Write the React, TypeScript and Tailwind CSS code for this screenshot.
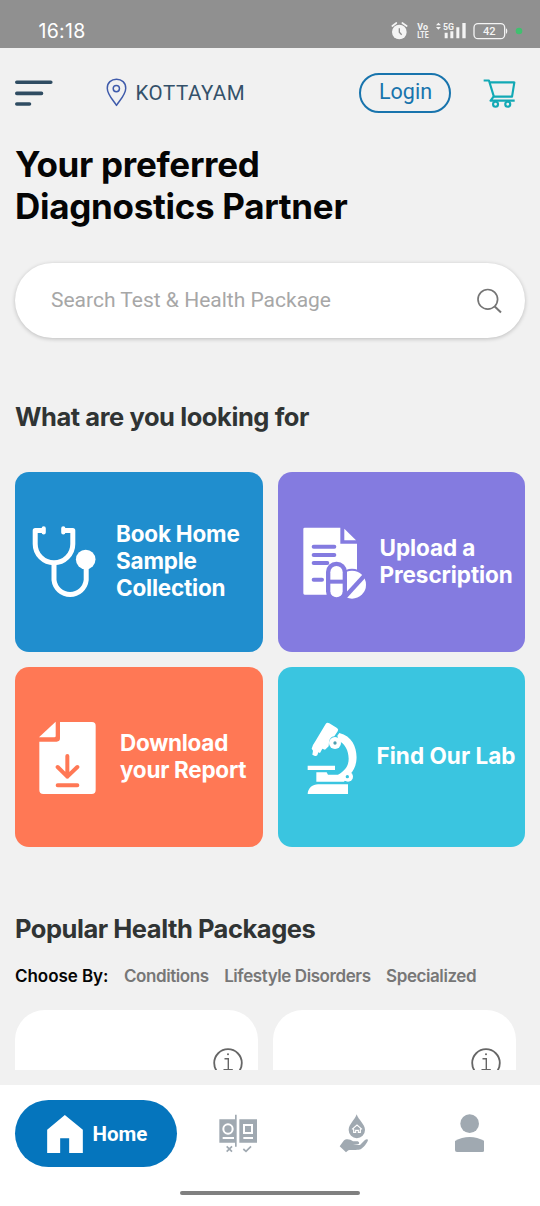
import React from 'react';

interface IconProps {
  className?: string;
}

interface ServiceCardProps {
  lines: string[];
  icon: React.ReactNode;
  className: string;
  textClass: string;
}

const MenuIcon = ({ className }: IconProps) => (
  <svg viewBox="0 0 38 28" className={className} stroke="#2f4c62" strokeWidth="3.6" strokeLinecap="round">
    <path d="M1.8 3.3H35.8M1.8 14.4H26.5M1.8 25H14.5" />
  </svg>
);

const PinIcon = ({ className }: IconProps) => (
  <svg viewBox="318 235 62 88" className={className} fill="none" stroke="#3f5bab" strokeWidth="4.5">
    <path d="M349 318C338 301 321 285 321 266C321 249 333 239 349 239C365 239 377 249 377 266C377 285 360 301 349 318Z" strokeLinejoin="round" />
    <circle cx="348.500" cy="267" r="9.500" />
  </svg>
);

const CartIcon = ({ className }: IconProps) => (
  <svg viewBox="399 234 100 93" className={className} fill="none" stroke="#12a9b5" strokeWidth="6.500" strokeLinejoin="round">
    <path d="M401 241H417L432 290H487L494 247H421" />
    <path d="M431 290L422 302H495" />
    <circle cx="437" cy="313" r="7.500" fill="#f1f1f1" />
    <circle cx="474" cy="313" r="7.500" fill="#f1f1f1" />
  </svg>
);

const StethoscopeIcon = () => (
  <svg viewBox="32 525 64 75" className="h-[75px] w-16" fill="none" stroke="#fff" strokeWidth="5">
    <path d="M44 530.500H35.200V544A18.800 18.800 0 0 0 72.800 544V530.500H63" strokeLinejoin="round" />
    <path d="M54 562V580A16.200 16.200 0 0 0 86.200 580V565" />
    <path d="M43.700 528.300V532.500M63.300 528.300V532.500" strokeWidth="4.200" strokeLinecap="round" />
    <circle cx="85.700" cy="559.500" r="9.800" fill="#fff" stroke="none" />
  </svg>
);

const PrescriptionIcon = () => (
  <svg viewBox="96 198 195 222" className="h-[74px] w-[65px]" fill="none">
    <path d="M104 203H211V251H261V404H104Q100 404 100 400V207Q100 203 104 203Z" fill="#fff" />
    <path d="M223 206L258 241H223Z" fill="#fff" />
    <path d="M131 260H193M131 285H193M131 309H172M131 359H156" stroke="#847be0" strokeWidth="12" strokeLinecap="round" />
    <circle cx="246" cy="374" r="48" fill="#847be0" />
    <circle cx="246" cy="374" r="42" fill="#fff" />
    <path d="M222 414L288 342" stroke="#847be0" strokeWidth="13" />
    <rect x="168" y="305" width="63" height="120" rx="31" fill="#847be0" />
    <rect x="181" y="318" width="37" height="94" rx="18.500" fill="#fff" />
    <path d="M176 365H222" stroke="#847be0" strokeWidth="12" />
  </svg>
);

const ReportIcon = () => (
  <svg viewBox="117 184 171 222" className="h-[74px] w-[57px]" fill="none">
    <path d="M180 187H276Q287 187 287 198V391Q287 403 275 403H130Q118 403 118 391V246H170Q180 246 180 236Z" fill="#fff" />
    <path d="M167 186V230Q167 233 163 233H117Z" fill="#fff" />
    <path d="M202 289V351M173 322L202 351L232 322M173 377H232" stroke="#ff7855" strokeWidth="12" strokeLinecap="round" strokeLinejoin="round" />
  </svg>
);

const MicroscopeIcon = () => (
  <svg viewBox="108 180 156 228" className="h-[76px] w-[52px]" fill="#fff">
    <path d="M167 192Q171 186 178 190L201 204Q207 208 203 214L193 229Q179 231 177 246L176 259L165 269L157 266L150 279L145 277L142 286Q138 290 133 287L127 284L129 272L125 266Q129 253 136 244Z" />
    <path d="M202 227L208 219C250 229 263 270 259 302C257 320 250 332 242 341L222 365H139V337H170L174 344H204C226 332 236 317 236 296C236 273 225 251 207 244Z" />
    <circle cx="195" cy="249" r="18" />
    <circle cx="234" cy="350" r="15" />
    <circle cx="195" cy="249" r="5" fill="#4f9fb0" />
    <circle cx="232" cy="350" r="5" fill="#3ac5e0" />
    <path d="M113 317H195V330H113ZM113 402C114 384 128 373 144 373H234V402Z" />
  </svg>
);

const InfoIcon = () => (
  <svg viewBox="0 0 30 30" className="size-[30px] shrink-0" fill="none" stroke="#666" strokeWidth="1.8">
    <circle cx="15" cy="15" r="13.800" />
    <path d="M11.500 10.700H15.300V21.500M10.500 21.600H19.800" strokeWidth="1.400" />
    <circle cx="15" cy="6.300" r="1" fill="#666" stroke="none" />
  </svg>
);

const ServiceCard: React.FC<ServiceCardProps> = ({ lines, icon, className, textClass }) => (
  <button className={`flex h-[180px] items-center rounded-[14px] text-left ${className}`}>
    <span className="flex shrink-0 pt-[2px]">{icon}</span>
    <span className={`pb-[2px] font-[Inter] text-[22.5px] leading-[27px] font-bold whitespace-nowrap text-white ${textClass}`}>
      {lines.map((line) => (
        <span key={line} className="block">{line}</span>
      ))}
    </span>
  </button>
);

const StatusBar = () => (
  <div className="flex h-12 shrink-0 items-start bg-[#909090] pl-[38.500px]">
    <span className="mt-[19px] w-[352.500px] font-[Inter] text-[19.500px] leading-6 tracking-[0.3px] text-white">16:18</span>
    <svg viewBox="125 63 405 60" className="mt-[21px] h-5 w-[135px]" fill="#f4f4f4">
      <circle cx="150" cy="96" r="22" />
      <path d="M129 78L141 69M159 69L172 78" stroke="#f4f4f4" strokeWidth="5" strokeLinecap="round" />
      <path d="M150 85V97L157 104" stroke="#909090" strokeWidth="4" fill="none" />
      <text x="204" y="89" fontSize="27" fontWeight="700" fontFamily="Roboto, sans-serif" textLength="32" lengthAdjust="spacingAndGlyphs">Vo</text>
      <text x="204" y="115" fontSize="27" fontWeight="700" fontFamily="Roboto, sans-serif" textLength="34" lengthAdjust="spacingAndGlyphs">LTE</text>
      <path d="M260 76L267 68L275 76ZM260 81L267 89L275 81Z" />
      <text x="281" y="89" fontSize="28" fontWeight="700" fontFamily="Roboto, sans-serif" textLength="33" lengthAdjust="spacingAndGlyphs">5G</text>
      <path d="M286 98H295V115H286ZM303 94H312V115H303ZM321 82H330V115H321ZM339 69H349V115H339Z" />
      <rect x="374" y="71" width="92" height="45" rx="12" fill="none" stroke="#f4f4f4" strokeWidth="4" />
      <path d="M470 85Q474 87 474 93T470 102Z" />
      <text x="401" y="105" fontSize="33" fontWeight="500" fontFamily="Roboto, sans-serif" textLength="38" lengthAdjust="spacingAndGlyphs">42</text>
      <circle cx="509" cy="93" r="10" fill="#40c070" />
    </svg>
  </div>
);

const Header = () => (
  <header className="flex h-[95px] shrink-0 items-start pl-[15px]">
    <MenuIcon className="mt-[31px] h-7 w-[38px]" />
    <PinIcon className="mt-[30px] ml-[52.500px] h-[29px] w-[21px]" />
    <span className="mt-[33px] ml-[9px] w-[223px] font-[Roboto] text-[20.500px] leading-6 tracking-[0.55px] text-[#34516a]">KOTTAYAM</span>
    <button className="mt-[25px] flex h-10 w-[92px] items-center justify-center rounded-full border-2 border-[#1874ad] pb-[2px] pl-[2px] font-[Roboto] text-[21.500px] text-[#1874ad]">
      Login
    </button>
    <CartIcon className="mt-[30px] ml-8 h-[31px] w-[33px]" />
  </header>
);

const BottomNav = () => (
  <nav className="flex h-[121px] shrink-0 flex-col bg-white pt-[15px]">
    <div className="flex items-start pl-[15px]">
      <button className="flex h-[67px] w-[162px] items-center rounded-full bg-[#0575bd] pl-8">
        <svg viewBox="141 87 107 114" className="h-[38px] w-9" fill="#fff">
          <path d="M194 87L248 131V201H207V157H180V201H141V131Z" />
        </svg>
        <span className="ml-[9.500px] pt-[2px] font-[Roboto] text-[20.500px] font-bold text-white">Home</span>
      </button>
      <svg viewBox="57 72 117 117" className="mt-[14px] ml-[42px] size-[39px]" fill="#a0a9b1">
        <path d="M58 88H105V158H58ZM118 88H171V158H118ZM105 74H110V170H105Z" />
        <g fill="none" stroke="#fff" strokeWidth="6">
          <circle cx="84" cy="117" r="14" />
          <path d="M68 144H102M130 144H159M132 105H156V129H132Z" />
        </g>
        <path d="M80 169L96 185M96 169L80 185M130 177L138 184L153 169" fill="none" stroke="#a0a9b1" strokeWidth="5" />
      </svg>
      <svg viewBox="417 71 90 117" className="mt-[14px] ml-[81px] h-[39px] w-[30px]" fill="#a0a9b1">
        <path d="M470 72C475 88 495 102 495 119A24.500 24.500 0 0 1 446 119C446 102 465 88 470 72Z" />
        <path d="M456 117L471 104L486 117M461 115V126H467V120H475V126H481V115" fill="none" stroke="#fff" strokeWidth="3.500" />
        <path d="M419 168L431 151C439 144 451 147 459 153H473C479 155 479 161 474 162L459 164H480L494 150C498 146 504 146 504 149C502 158 490 172 482 177C475 181 449 177 445 180L438 186Z" />
      </svg>
      <svg viewBox="225 342 88 115" className="mt-[14px] ml-[86px] h-[38.300px] w-[29.300px]" fill="#a0a9b1">
        <circle cx="269" cy="371" r="28" />
        <path d="M225 423C251 407 287 407 313 423V450Q313 456 307 456H231Q225 456 225 450Z" />
      </svg>
    </div>
    <div className="mx-auto mt-6 h-[4px] w-[180px] rounded-full bg-[#808080]" />
  </nav>
);

export default function App() {
  return (
    <div className="flex h-[1206px] w-[540px] flex-col overflow-hidden bg-[#f1f1f1]">
      <StatusBar />
      <Header />

      <main className="h-[942px] shrink-0 px-[15px] whitespace-nowrap">
        <h1 className="font-[Inter] text-[35px] leading-[42px] font-bold tracking-[-0.3px] text-[#050505]">
          Your preferred
          <br />
          Diagnostics Partner
        </h1>

        <div className="mt-9 flex h-[75px] items-center rounded-full bg-white pr-[23px] pl-9 shadow-[0_1px_4px_rgba(0,0,0,0.22)]">
          <span className="flex-1 pt-[1px] font-[Roboto] text-[21px] text-[#a7a7a7]">Search Test &amp; Health Package</span>
          <svg viewBox="0 0 26 26" className="size-[26px]" fill="none" stroke="#757575" strokeWidth="1.700">
            <circle cx="11.800" cy="11.300" r="9.800" />
            <path d="M18.500 18.200L25 24.500" strokeWidth="2" />
          </svg>
        </div>

        <h2 className="mt-[63px] font-[Inter] text-[25.500px] leading-8 font-bold tracking-[-0.43px] text-[#303434]">What are you looking for</h2>

        <div className="mt-[38.500px] grid grid-cols-2 gap-[15px]">
          <ServiceCard
            className="bg-[#208ece] pl-[17px]"
            textClass="ml-[20px] tracking-[-0.2px]"
            icon={<StethoscopeIcon />}
            lines={['Book Home', 'Sample', 'Collection']}
          />
          <ServiceCard
            className="bg-[#847be0] pl-[24px]"
            textClass="ml-[13px] tracking-[-0.08px]"
            icon={<PrescriptionIcon />}
            lines={['Upload a', 'Prescription']}
          />
          <ServiceCard
            className="bg-[#ff7855] pl-[24px]"
            textClass="ml-[24px] tracking-[-0.27px]"
            icon={<ReportIcon />}
            lines={['Download', 'your Report']}
          />
          <ServiceCard
            className="bg-[#3ac5e0] pl-[28px]"
            textClass="ml-[19px] tracking-[0.03px]"
            icon={<MicroscopeIcon />}
            lines={['Find Our Lab']}
          />
        </div>

        <h2 className="mt-[66.500px] font-[Inter] text-[25.500px] leading-8 font-bold tracking-[-0.47px] text-[#303434]">Popular Health Packages</h2>

        <div className="mt-[19px] flex gap-[15.500px] font-[Inter] text-[17px] leading-6 font-semibold tracking-[-0.42px] text-[#777]">
          <span className="tracking-[-0.05px] text-[#050505]">Choose By:</span>
          <span>Conditions</span>
          <span>Lifestyle Disorders</span>
          <span>Specialized</span>
        </div>

        <div className="mt-[22px] flex h-[60px] gap-[15px] overflow-hidden">
          {[0, 1].map((n) => (
            <div key={n} className="flex h-[260px] w-[243px] shrink-0 items-start justify-end rounded-[30px] bg-white pt-[38px] pr-[15px]">
              <InfoIcon />
            </div>
          ))}
        </div>
      </main>

      <BottomNav />
    </div>
  );
}
